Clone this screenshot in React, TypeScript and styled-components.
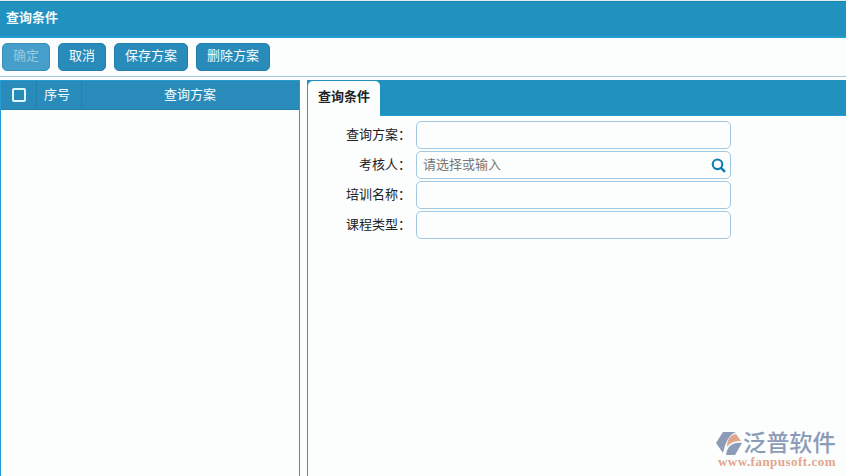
import React from "react";
import styled, { createGlobalStyle } from "styled-components";

const GlobalStyle = createGlobalStyle`
  * { box-sizing: border-box; }
  body {
    margin: 0;
    background: #fcfefe;
    font-family: "Liberation Sans", "Noto Sans CJK SC", sans-serif;
    font-size: 13px;
    color: #222;
    overflow: hidden;
  }
`;

const Page = styled.div`
  position: relative;
  display: flex;
  flex-direction: column;
  width: 846px;
  height: 476px;
  overflow: hidden;
  border-top: 1px solid #e4eeee;
`;

const TitleBar = styled.header`
  height: 37px;
  flex: none;
  padding-left: 6px;
  background: #2191c0;
  border-top: 1px solid #1e86b2;
  border-bottom: 2px solid #259bd0;
  color: #f4fcfd;
  font-weight: 700;
  line-height: 32px;
`;

const Toolbar = styled.div`
  display: flex;
  flex: none;
  gap: 8px;
  height: 39px;
  padding: 5px 2px 0;
  border-bottom: 1px solid #a2c8e2;
`;

const ToolButton = styled.button<{ $width: number }>`
  width: ${(p) => p.$width}px;
  height: 28px;
  padding: 0 0 2px;
  border: 1px solid #2280ae;
  border-radius: 5px;
  background: #298bb9;
  color: #f4fcfd;
  font: inherit;
  line-height: 24px;
  &:disabled {
    border-color: #3a8fbb;
    background: #469fcb;
    color: #98c9df;
  }
`;

const Content = styled.main`
  display: flex;
  flex: 1;
  gap: 7px;
  padding-top: 3px;
`;

const SchemePanel = styled.section`
  width: 300px;
  border: 1px solid #259bd0;
  border-bottom: 0;
`;

const TableHead = styled.div`
  display: grid;
  grid-template-columns: 36px 45px 1fr;
  height: 29px;
  background: #298bb9;
  border-bottom: 1px solid #2280ae;
  color: #f4fcfd;
`;

const HeadCell = styled.div`
  display: flex;
  align-items: center;
  justify-content: center;
  padding-bottom: 3px;
  border-right: 1px solid #2280ae;
  &:nth-child(2) { padding-right: 4px; }
  &:last-child { border-right: 0; padding-right: 1px; }
`;

const CheckBox = styled.span`
  width: 14px;
  height: 14px;
  margin-top: 3px;
  border: 2px solid #e0f8fc;
  border-radius: 2px;
`;

const QueryPanel = styled.section`
  flex: 1;
  border-left: 1px solid #259bd0;
`;

const TabBar = styled.div`
  height: 36px;
  padding-top: 1px;
  background: #2191c0;
  border-bottom: 1px solid #259bd0;
`;

const Tab = styled.div`
  width: 72px;
  height: 35px;
  border-radius: 5px 5px 0 0;
  background: #fcfefe;
  font-weight: 700;
  line-height: 32px;
  text-align: center;
`;

const Form = styled.form`
  display: grid;
  gap: 2px;
  padding-top: 5px;
`;

const Row = styled.label`
  display: grid;
  grid-template-columns: 103px 315px;
  column-gap: 5px;
  height: 28px;
`;

const Label = styled.span`
  line-height: 28px;
  text-align: right;
  white-space: nowrap;
`;

const Field = styled.span`
  display: flex;
  align-items: center;
  justify-content: space-between;
  padding: 0 4px 0 6px;
  border: 1px solid #a2c8e2;
  border-radius: 5px;
`;

const TextInput = styled.input`
  flex: 1;
  min-width: 0;
  padding: 0 0 2px;
  border: 0;
  outline: 0;
  background: transparent;
  font: inherit;
  &::placeholder { color: #777; opacity: 1; }
`;

const Watermark = styled.div`
  position: absolute;
  right: 10px;
  bottom: 8px;
  width: 120px;
`;

const Brand = styled.div`
  display: flex;
  height: 24px;
  color: #8c9bb8;
  font-size: 23.2px;
  font-weight: 500;
  line-height: 22px;
  white-space: nowrap;
  svg { flex: none; }
`;

const Site = styled.div`
  padding-left: 2px;
  color: #e2a58e;
  font: 700 13px/12px "Liberation Serif", serif;
  letter-spacing: 0.48px;
  white-space: nowrap;
`;

const fields = [
  { label: "查询方案：" },
  { label: "考核人：", placeholder: "请选择或输入" },
  { label: "培训名称：" },
  { label: "课程类型：" },
];

const SearchIcon = () => (
  <svg width="15" height="15" viewBox="0 0 15 15" fill="none" stroke="#0d7cae">
    <circle cx="6.5" cy="6.3" r="4.8" strokeWidth="2.1" />
    <path d="M10 9.9 14 13.9" strokeWidth="2.4" />
  </svg>
);

const BrandMark = () => (
  <svg width="27" height="24" viewBox="0 0 27 24">
    <path d="M7 0H20C13 3 10 9 7 21L0 11Z" fill="#8c9bb8" />
    <path d="M11 15C11 7 14 3 20 2L25 9C18 9 14 11 11 15Z" fill="#e2a58e" />
    <path d="M10 23C11 15 16 10 26 11L19 23Z" fill="#8c9bb8" />
  </svg>
);

export default function App() {
  return (
    <Page>
      <GlobalStyle />
      <TitleBar>查询条件</TitleBar>
      <Toolbar>
        <ToolButton $width={48} disabled>确定</ToolButton>
        <ToolButton $width={48}>取消</ToolButton>
        <ToolButton $width={74}>保存方案</ToolButton>
        <ToolButton $width={74}>删除方案</ToolButton>
      </Toolbar>
      <Content>
        <SchemePanel>
          <TableHead>
            <HeadCell><CheckBox /></HeadCell>
            <HeadCell>序号</HeadCell>
            <HeadCell>查询方案</HeadCell>
          </TableHead>
        </SchemePanel>
        <QueryPanel>
          <TabBar><Tab>查询条件</Tab></TabBar>
          <Form>
            {fields.map((f) => (
              <Row key={f.label}>
                <Label>{f.label}</Label>
                <Field>
                  <TextInput placeholder={f.placeholder} />
                  {f.placeholder && <SearchIcon />}
                </Field>
              </Row>
            ))}
          </Form>
        </QueryPanel>
      </Content>
      <Watermark>
        <Brand><BrandMark />泛普软件</Brand>
        <Site>www.fanpusoft.com</Site>
      </Watermark>
    </Page>
  );
}
